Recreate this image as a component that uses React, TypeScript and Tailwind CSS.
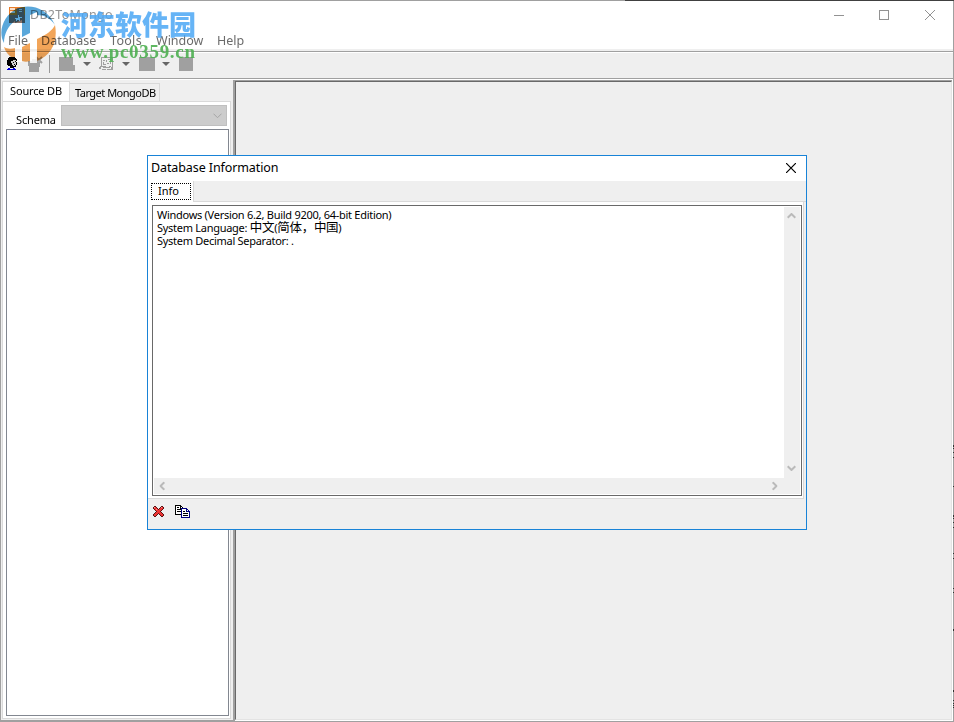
import type { ReactNode } from 'react'

function DropArrow() {
  return (
    <svg className="h-[4px] w-[8px] fill-[#666]" viewBox="0 0 8 4">
      <path d="M0 0h8L4 4z" />
    </svg>
  )
}

function AppIcon() {
  return (
    <svg className="h-[16px] w-[16px]" viewBox="0 0 16 16" shapeRendering="crispEdges">
      <path fill="#e77d2b" d="M0 0h16v9H0z" />
      <path fill="#8b7268" d="M0 8h16v8H0zM8 1h7v7H8z" />
      <path fill="#f9dfca" d="M1 1h5v2H1zM1 4h5v2H1zM10 2h3v1h-3zM10 4h3v1h-3z" />
      <path fill="#fff" d="M9 8h1v2h3v1h-2v3h-1v-1H8v1H7v-2H6v-1h3z" />
    </svg>
  )
}

function UserIcon() {
  return (
    <svg className="h-[14px] w-[10px]" viewBox="0 0 10 14" shapeRendering="crispEdges">
      <path fill="#000" d="M2 0h6v1h1v1h1v2H9v1h1v3H9v2H7v1H3V9H1V8H0V3h1V1h1z" />
      <path fill="#d0d0d0" d="M6 3h3v1H8v1h1v3H8v1H6V8H5V6H4V4h2z" />
      <path fill="#000" d="M6 5h1v1H6zM7 7h1v1H7z" />
      <path fill="#0000d8" d="M1 11h2v1h3v-1h2v1h1v1H0v-1h1z" />
    </svg>
  )
}

function DisconnectIcon() {
  return (
    <svg className="h-[16px] w-[15px]" viewBox="0 0 15 16">
      <path fill="#a0a0a0" d="M0 5h4V3h5v3h3v5h-1v5H1v-6H0z" />
      <path stroke="#a0a0a0" strokeWidth="2" fill="none" d="M8 1l6 6M14 1L8 7" />
    </svg>
  )
}

function QueryIcon() {
  return (
    <svg className="h-[14px] w-[15px]" viewBox="0 0 15 14" shapeRendering="crispEdges">
      <path
        fill="#a0a0a0"
        d="M2 0h12v1H2zM13 1h1v9h-1zM2 1h1v8H2zM4 3h2v1H4zM7 3h1v2H7zM9 2h3v1H9zM4 5h1v2h2v1H4zM8 6h2v1H8zM11 4h1v3h-1zM1 9h6v1H1zM0 10h2v2H0zM4 10h7v1H4zM10 9h2v1h-2zM12 10h2v3h-2zM3 12h4v1H3zM8 12h4v1H8z"
      />
    </svg>
  )
}

function DeleteIcon() {
  return (
    <svg className="h-[11px] w-[11px]" viewBox="0 0 11 11" shapeRendering="crispEdges">
      <path fill="#5a1414" d="M1 0h2v1h1v1h1v1h1V2h1V1h1V0h2v1h1v2h-1v1H9v1H8v1h1v1h1v1h1v2h-1v1H8v-1H7V9H6V8H5v1H4v1H3v1H1v-1H0V8h1V7h1V6h1V5H2V4H1V3H0V1h1z" />
      <path fill="#ed3434" d="M1 1h2v1h1v1h1v1h1V3h1V2h1V1h2v2H9v1H8v1H7v1h1v1h1v1h1v2H8V9H7V8H6V7H5v1H4v1H3v1H1V8h1V7h1V6h1V5H3V4H2V3H1z" />
      <path fill="#ff9292" d="M1 1h1v1H1zM3 3h1v1H3zM8 1h1v1H8z" />
    </svg>
  )
}

function CopyIcon() {
  return (
    <svg className="h-[13px] w-[15px]" viewBox="0 0 15 13" shapeRendering="crispEdges">
      <path fill="#fff" stroke="#000" d="M.5.5h5l3 3v6h-8z" />
      <path fill="#000" d="M5 0h1v3h3v1H5zM2 2h2v1H2zM2 4h4v1H2zM2 6h4v1H2z" />
      <path fill="#fff" stroke="#000080" d="M6.500 3.500h5l3 3v6h-8z" />
      <path fill="#000080" d="M11 3h1v3h3v1h-4z" />
      <path fill="#000" d="M8 6h2v1H8zM8 8h5v1H8zM8 10h5v1H8z" />
    </svg>
  )
}

function Chevron({ className }: { className: string }) {
  return (
    <svg className={`h-[6px] w-[9px] ${className}`} viewBox="0 0 9 6">
      <path fill="none" stroke="#bababa" strokeWidth="2" d="M.700 4.800l3.800-3.800 3.800 3.800" />
    </svg>
  )
}

function MenuItem({ children, className }: { children: ReactNode; className: string }) {
  return <span className={`whitespace-nowrap ${className}`}>{children}</span>
}

function Watermark() {
  return (
    <>
      {/* multiply keeps the title and menu readable through the logo */}
      <svg className="pointer-events-none absolute left-0 top-0 h-[64px] w-[60px] mix-blend-multiply" viewBox="0 0 60 64">
        <path
          fill="#5aa7da"
          d="M4 43C-3 30 5 15 16 9 29 3 47 7 55 25 50 18 44 15 37 15v-3l-7 3v18l-8 4V20l-7 3v-2C8 26 4 34 4 43z"
        />
        <path
          fill="#f2a559"
          d="M4 47c3 2 7 2 11 1v11C10 57 6 53 4 47zM22 47l8-4v18c-3 1-5 1-8 0zM37 39c9-4 16-9 18-14 3 16-3 30-18 36z"
        />
      </svg>
      <svg className="pointer-events-none absolute left-0 top-0 h-[64px] w-[60px]" viewBox="0 0 60 64">
        <path fill="#fff" fillOpacity=".85" d="M15 51h7v11h-7zM30 51h7v12h-7z" />
      </svg>
      <span className="pointer-events-none absolute left-[61px] top-[4px] whitespace-nowrap font-['Noto_Sans_CJK_SC',sans-serif] text-[27px] font-black leading-[40px] text-[#4ba7f5]/85">
        河东软件园
      </span>
      <span className="pointer-events-none absolute left-[61px] top-[42px] whitespace-nowrap font-['Liberation_Serif',serif] text-[19px] font-bold leading-[20px] tracking-[0.7px] text-[#4caf50]/90">
        www.pc0359.cn
      </span>
    </>
  )
}

function MainWindow() {
  return (
    <div className="flex h-[722px] w-[954px] flex-col border border-[#a0a0a0] bg-white">
      <header className="flex h-[28px] shrink-0 items-center pl-[8px] pr-[17px] text-[13px] text-[#929292]">
        <AppIcon />
        <span className="ml-[5px] font-['Noto_Sans',sans-serif] text-[12.500px] tracking-[0.3px]">DB2ToMongo</span>
        <svg className="ml-auto h-[12px] w-[102px]" viewBox="0 0 102 12" fill="none" stroke="#929292">
          <path d="M0 6.500h10M45.500 1.500h9v9h-9z" shapeRendering="crispEdges" />
          <path d="M91 1l10 10M101 1L91 11" />
        </svg>
      </header>

      <nav className="flex h-[20px] shrink-0 items-center pl-[7px] pt-[4px] font-['Noto_Sans',sans-serif] text-[12.500px] leading-[16px] text-[#6b6b6b]">
        <MenuItem className="w-[33px]">File</MenuItem>
        <MenuItem className="w-[69px]">Database</MenuItem>
        <MenuItem className="w-[46px] tracking-[0.3px]">Tools</MenuItem>
        <MenuItem className="w-[61px]">Window</MenuItem>
        <MenuItem className="w-[30px]">Help</MenuItem>
      </nav>

      <div className="h-[4px] shrink-0 border-b border-white bg-[#efefef] pt-[2px]">
        <div className="h-px bg-[#a0a0a0]" />
      </div>

      <div className="flex h-[25px] shrink-0 items-center bg-[#efefef] pb-[3px] pl-[6px]">
        <span className="z-10"><UserIcon /></span>
        <span className="ml-[11px]"><DisconnectIcon /></span>
        <i className="ml-[6px] h-[18px] w-px bg-[#999]" />
        <svg className="ml-[9px] h-[14px] w-[16px]" viewBox="0 0 16 14">
          <path fill="#a0a0a0" d="M0 0h14v8h2v6H0z" />
        </svg>
        <span className="ml-[8px]"><DropArrow /></span>
        <span className="ml-[8px]"><QueryIcon /></span>
        <span className="ml-[8px]"><DropArrow /></span>
        <i className="ml-[9px] h-[14px] w-[16px] bg-[#a0a0a0]" />
        <span className="ml-[7px]"><DropArrow /></span>
        <i className="ml-[9px] h-[14px] w-[14px] bg-[#a0a0a0]" />
      </div>

      <div className="h-[2px] shrink-0 border-t border-[#a0a0a0] bg-white" />

      <div className="flex min-h-0 flex-1">
        <aside className="flex w-[234px] flex-col border-b border-r-2 border-[#a0a0a0] bg-[#efefef] pb-px pl-px pr-[2px] pt-px font-['Noto_Sans',sans-serif] text-[11px] text-black">
          <div className="flex h-[20px] shrink-0 items-end">
            <div className="h-[20px] w-[68px] whitespace-nowrap border-l border-r border-t border-[#d9d9d9] bg-white pl-[7px] leading-[18px] tracking-[-0.15px]">
              Source DB
            </div>
            <div className="h-[18px] w-[90px] whitespace-nowrap border-r border-t border-[#d9d9d9] pl-[5px] leading-[17px] tracking-[-0.5px]">
              Target MongoDB
            </div>
          </div>
          <div className="flex min-h-0 flex-1 flex-col border-b border-l border-r border-[#d9d9d9] bg-white">
            <div className="flex h-[28px] shrink-0">
              <div className="flex flex-1 border-t border-[#d9d9d9] pl-[13px] pt-[3px]">
                <span className="w-[45px] pt-[7px] leading-[16px] tracking-[-0.15px]">Schema</span>
                <div className="flex h-[21px] w-[166px] items-center justify-end border border-[#bfbfbf] bg-[#cccccc] pr-[4px]">
                  <svg className="h-[6px] w-[9px]" viewBox="0 0 9 6">
                    <path fill="none" stroke="#a5a5a5" d="M.500.700l4 4 4-4" />
                  </svg>
                </div>
              </div>
            </div>
            <div className="mb-[2px] ml-[3px] mr-px flex-1 border border-[#828790] bg-white" />
          </div>
        </aside>

        <main className="mb-px mr-px flex flex-1 border-t border-[#a0a0a0]">
          <div className="flex-1 border border-b-[#e3e3e3] border-l-[#696969] border-r-[#e3e3e3] border-t-[#696969] bg-[#efefef]" />
        </main>
      </div>
    </div>
  )
}

function DatabaseInformation() {
  return (
    <section className="absolute left-[147px] top-[155px] flex h-[375px] w-[660px] flex-col border border-[#1883d7] bg-[#efefef] text-black">
      <header className="flex h-[25px] shrink-0 items-center justify-between bg-white pb-px pl-[3px] pr-[10px] font-['Noto_Sans',sans-serif] text-[12.500px] tracking-[-0.1px]">
        <h1 className="whitespace-nowrap pt-px">Database Information</h1>
        <svg className="h-[10px] w-[10px]" viewBox="0 0 10 10" stroke="#000" strokeWidth="1.200">
          <path d="M0 0l10 10M10 0L0 10" />
        </svg>
      </header>

      <div className="flex h-[21px] shrink-0">
        <div className="h-[21px] w-[46px] border-r border-[#d9d9d9] bg-white pl-[3px] pt-[2px]">
          <div className="h-[17px] w-[40px] border border-dotted border-black pl-[6px] font-['Noto_Sans',sans-serif] text-[11px] leading-[14px]">
            Info
          </div>
        </div>
        <div className="flex-1 border-b border-[#d9d9d9]" />
      </div>

      <div className="mr-[2px] flex h-[297px] shrink-0 border-b border-r border-[#d9d9d9] bg-white pb-[2px] pl-[4px] pr-px pt-[3px]">
        <div className="flex flex-1 border border-[#696969] p-px">
          <div className="flex min-w-0 flex-1 flex-col">
            <div className="flex-1 whitespace-nowrap pl-[3px] pt-px font-['Noto_Sans','Noto_Sans_CJK_SC',sans-serif] text-[11px] leading-[13px] tracking-[-0.28px]">
              <p>Windows (Version 6.2, Build 9200, 64-bit Edition)</p>
              <p className="h-[13px]">
                System Language: <span className="text-[12.500px]">中文</span>(
                <span className="text-[12.500px]">简体，中国</span>)
              </p>
              <p>System Decimal Separator: .</p>
            </div>
            <div className="flex h-[16px] items-center justify-between bg-[#efefef] pb-px pl-[4px] pr-[5px]">
              <Chevron className="-rotate-90" />
              <Chevron className="rotate-90" />
            </div>
          </div>
          <div className="flex w-[16px] flex-col items-center justify-between bg-[#efefef] pb-[23px] pr-[2px] pt-[6px]">
            <Chevron className="" />
            <Chevron className="rotate-180" />
          </div>
        </div>
      </div>

      <footer className="flex items-center gap-[11px] pl-[5px] pt-[6px]">
        <DeleteIcon />
        <CopyIcon />
      </footer>
    </section>
  )
}

// desktop content peeking out past the window's right border
function EdgeMarks() {
  return (
    <svg className="absolute right-0 top-[440px] h-[270px] w-px" viewBox="0 0 1 270" shapeRendering="crispEdges">
      <path
        fill="#303030"
        d="M0 5h1v2H0zM0 8h1v1H0zM0 12h1v1H0zM0 17h1v1H0zM0 46h1v1H0zM0 75h1v2H0zM0 78h1v1H0zM0 82h1v1H0zM0 87h1v1H0zM0 113h1v1H0zM0 118h1v1H0zM0 148h1v1H0zM0 152h1v1H0zM0 189h1v2H0zM0 250h1v2H0zM0 260h1v1H0zM0 263h1v1H0zM0 265h1v1H0zM0 267h1v1H0z"
      />
    </svg>
  )
}

export default function App() {
  return (
    <div className="relative h-[722px] w-[954px] overflow-hidden">
      <MainWindow />
      <div className="absolute left-[625px] top-0 h-px w-[329px] bg-[#404040]" />
      <EdgeMarks />
      <Watermark />
      <DatabaseInformation />
    </div>
  )
}
